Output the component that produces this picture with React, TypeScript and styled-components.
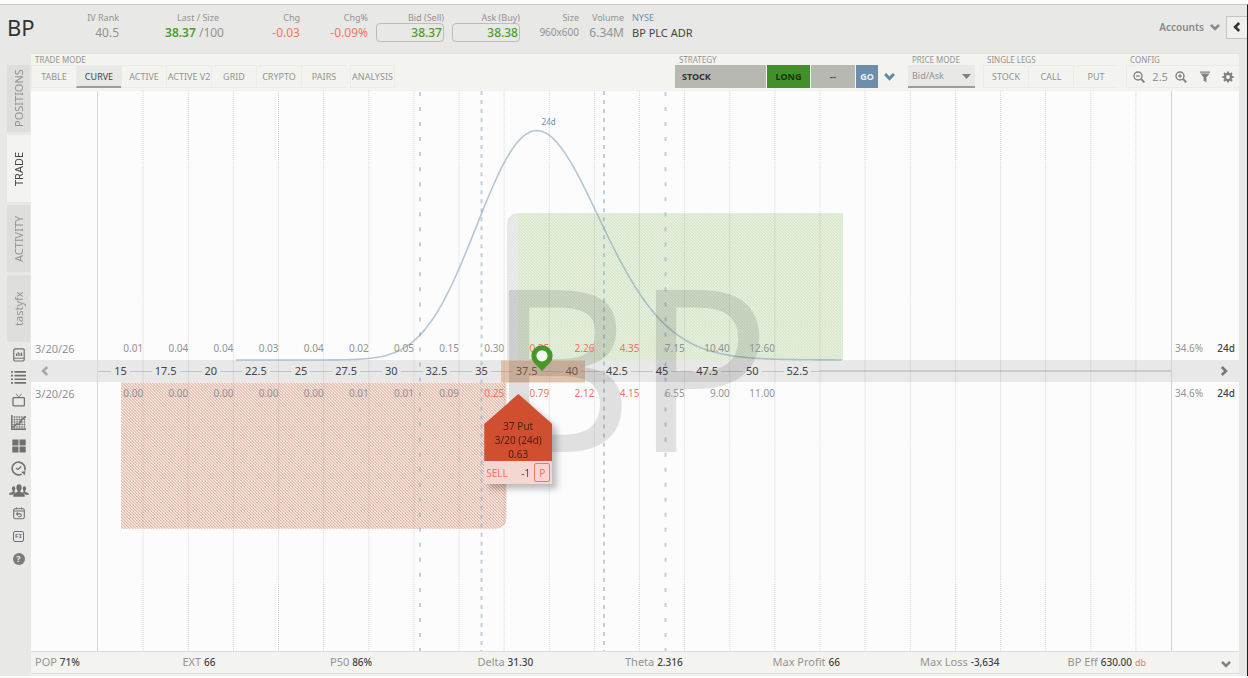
import React from 'react';
import styled, { createGlobalStyle, css } from 'styled-components';

const GlobalStyle = createGlobalStyle`
  *, *::before, *::after { box-sizing: border-box; }
  html, body { margin: 0; background: #fff; }
  body, button, select { font-family: 'Noto Sans', 'Open Sans', sans-serif; }
  button { border: 0; padding: 0; background: none; cursor: pointer; }
`;

const c = {
  chrome: '#e8e8e6',
  panel: '#f3f3ef',
  line: '#e3e3df',
  chart: '#fcfcfc',
  muted: '#939393',
  dark: '#444444',
  red: '#f17564',
  green: '#4d9c2d',
  blue: '#6d90ae',
};

/* ---------- shell ---------- */

const Page = styled.div`
  display: flex;
  flex-direction: column;
  height: 100vh;
  min-height: 620px;
  min-width: 1200px;
  padding: 4px 0 2px;
`;

const Frame = styled.div`
  flex: 1;
  display: flex;
  flex-direction: column;
  background: ${c.chrome};
  border-top: 1px solid #c9c9c5;
  border-right: 1px solid #1c1f22;
  min-height: 0;
`;

const Body = styled.div`
  flex: 1;
  display: flex;
  min-height: 0;
  padding-right: 8px;
`;

/* ---------- quote header ---------- */

const Header = styled.header`
  display: flex;
  height: 48px;
  flex-shrink: 0;
  padding-top: 7px;
`;

const Ticker = styled.h1`
  margin: 0;
  width: 64px;
  padding-left: 7px;
  font-size: 22px;
  line-height: 30px;
  font-weight: 400;
  color: #333;
`;

const Quote = styled.div<{ $w: number; $left?: boolean }>`
  width: ${(p) => p.$w}px;
  margin-right: 8px;
  display: flex;
  flex-direction: column;
  align-items: ${(p) => (p.$left ? 'flex-start' : 'flex-end')};
  white-space: nowrap;
`;

const QuoteLabel = styled.span<{ $tone?: string; $inset?: boolean }>`
  font-size: 9px;
  line-height: 12px;
  height: 11px;
  padding-right: ${(p) => (p.$inset ? 5 : 0)}px;
  color: ${(p) => p.$tone ?? c.muted};
`;

const QuoteValue = styled.span<{ $tone?: string; $size?: number; $strong?: boolean }>`
  font-size: ${(p) => p.$size ?? 12}px;
  line-height: 19px;
  font-weight: ${(p) => (p.$strong ? 600 : 400)};
  color: ${(p) => p.$tone ?? c.muted};
`;

const PriceButton = styled.button`
  width: 68px;
  height: 19px;
  border: 1px solid #bcbcba;
  border-radius: 4px;
  padding-right: 1px;
  text-align: right;
  font-size: 12px;
  line-height: 16px;
  font-weight: 500;
  color: ${c.green};
`;

const HeaderEnd = styled.div`
  margin-left: auto;
  display: flex;
  align-items: center;
  height: 30px;
  gap: 6px;
`;

const Accounts = styled.button`
  display: flex;
  align-items: center;
  gap: 6px;
  font-size: 10px;
  font-weight: 600;
  color: #888;
`;

const Collapse = styled.button`
  display: flex;
  align-items: center;
  justify-content: center;
  width: 21px;
  height: 23px;
  background: #f0f0ee;
  border: 1px solid #c4c4c2;
  border-right: 0;
`;

/* ---------- sidebar ---------- */

const Sidebar = styled.nav`
  width: 31px;
  flex-shrink: 0;
  padding: 12px 0 0 7px;
`;

const SideTabs = styled.div`
  display: flex;
  flex-direction: column;
  gap: 3px;
`;

const SideTab = styled.button<{ $active?: boolean }>`
  height: 67px;
  width: ${(p) => (p.$active ? 24 : 23)}px;
  display: flex;
  align-items: center;
  justify-content: center;
  writing-mode: vertical-rl;
  transform: rotate(180deg);
  font-size: 11px;
  line-height: 22px;
  color: ${(p) => (p.$active ? c.dark : c.muted)};
  background: ${(p) => (p.$active ? c.panel : '#dededc')};
`;

const SideIcons = styled.div`
  display: flex;
  flex-direction: column;
  justify-content: space-between;
  height: 226px;
  margin-top: 2px;
`;

const SideIcon = styled.button`
  display: flex;
  align-items: center;
  justify-content: center;
  width: 23px;
  height: 22px;
  color: #707070;
`;

/* ---------- toolbar ---------- */

const Main = styled.main`
  flex: 1;
  min-width: 0;
  display: flex;
  flex-direction: column;
  background: ${c.panel};
`;

const Toolbar = styled.div`
  display: flex;
  height: 38px;
  flex-shrink: 0;
  border-top: 1px solid ${c.line};
  gap: 8px;
`;

const Group = styled.section<{ $grow?: boolean }>`
  display: flex;
  flex-direction: column;
  ${(p) => p.$grow && css`flex: 1;`}
`;

const GroupLabel = styled.span`
  height: 11px;
  padding-left: 4px;
  font-size: 8px;
  line-height: 12px;
  color: ${c.muted};
  white-space: nowrap;
`;

const Strip = styled.div<{ $gap?: number }>`
  display: flex;
  height: 23px;
  gap: ${(p) => p.$gap ?? 0}px;
`;

const ModeButton = styled.button<{ $active?: boolean; $apart?: boolean }>`
  width: 45px;
  height: 23px;
  margin-left: ${(p) => (p.$apart ? 4 : 0)}px;
  font-size: 9px;
  line-height: 21px;
  white-space: nowrap;
  color: ${(p) => (p.$active ? c.dark : c.muted)};
  background: ${(p) => (p.$active ? '#e8e8e6' : 'transparent')};
  border: 1px solid #ebebe7;
  border-right-width: ${(p) => (p.$apart ? 1 : 0)}px;
  ${(p) => p.$active && css`border-bottom: 2px solid #9c9c9a;`}
`;

const StrategyButton = styled.button<{ $w: number; $bg: string; $fg: string; $start?: boolean }>`
  width: ${(p) => p.$w}px;
  height: 23px;
  padding: 0 7px;
  text-align: ${(p) => (p.$start ? 'left' : 'center')};
  background: ${(p) => p.$bg};
  color: ${(p) => p.$fg};
  font-size: 9px;
  font-weight: 700;
`;

const IconButton = styled.button<{ $w?: number }>`
  width: ${(p) => p.$w ?? 22}px;
  height: 23px;
  display: flex;
  align-items: center;
  justify-content: center;
  color: #808080;
`;

const GoButton = styled(StrategyButton)`
  padding: 0;
`;

const SelectWrap = styled.label`
  position: relative;
  display: block;
  height: 23px;
  svg { position: absolute; right: 4px; top: 9px; pointer-events: none; }
`;

const Select = styled.select`
  display: block;
  appearance: none;
  width: 67px;
  height: 23px;
  padding: 0 4px;
  border: 0;
  border-bottom: 2px solid #9c9c9a;
  border-radius: 0;
  background: #e8e8e6;
  font-size: 9px;
  color: ${c.muted};
`;

const ConfigStrip = styled(Strip)`
  width: 113px;
  border: 1px solid #ebebe7;
  border-right: 0;
  align-items: center;
  justify-content: space-between;
  padding: 0 0 0 1px;
`;

const ZoomValue = styled.span`
  font-size: 11px;
  color: ${c.muted};
`;

/* ---------- chart ---------- */

const Chart = styled.div`
  position: relative;
  flex: 1;
  min-height: 0;
  display: grid;
  grid-template-columns: 67px minmax(0, 1fr) 68px;
  grid-template-rows: minmax(0, 1fr) 22px minmax(0, 1fr);
  background: ${c.chart};
  border-bottom: 1px solid #dededa;
`;

const Plot = styled.div`
  grid-column: 2;
  grid-row: 1 / 4;
  position: relative;
  box-shadow: -1px 0 #d8d8d8, 1px 0 #d0d0d0;
`;

const Drawing = styled.svg`
  position: absolute;
  inset: 0;
  width: 100%;
  height: 100%;
`;

const Watermark = styled.span`
  position: absolute;
  left: 50%;
  top: 50%;
  transform: translate(-52%, -53%);
  font-size: 226px;
  line-height: 226px;
  color: rgba(0, 0, 0, 0.11);
`;

const Band = styled.div<{ $col: number }>`
  grid-column: ${(p) => p.$col};
  grid-row: 2;
  background: rgba(0, 0, 0, 0.08);
  display: flex;
  align-items: center;
`;

const Pager = styled.button<{ $tone: string; $end?: boolean }>`
  display: flex;
  margin-left: ${(p) => (p.$end ? 48 : 9)}px;
  color: ${(p) => p.$tone};
`;

const StrikeColumns = styled.div`
  display: grid;
  width: 100%;
  grid-template-columns: repeat(23, minmax(0, 9fr)) minmax(0, 7fr);
`;

const Strike = styled.span`
  display: flex;
  align-items: center;
  justify-content: center;
  gap: 3px;
  font-size: 11px;
  line-height: 22px;
  color: ${c.dark};
  &::before, &::after { content: ''; flex: 1; height: 1px; background: #c4c4c4; }
`;

const StrikeTail = styled.span`
  grid-column: 17 / 25;
  align-self: center;
  height: 2px;
  background: #cbcbcb;
`;

const PriceRow = styled.div<{ $row: number }>`
  grid-column: 1 / 4;
  grid-row: ${(p) => p.$row};
  align-self: ${(p) => (p.$row === 1 ? 'end' : 'start')};
  position: relative;
  display: grid;
  grid-template-columns: 67px minmax(0, 1fr) 68px;
  font-size: 11px;
  line-height: 23px;
  height: 23px;
  color: ${c.muted};
`;

const Expiry = styled.span`
  padding-left: 4px;
`;

const Price = styled.span<{ $hot?: boolean }>`
  text-align: right;
  font-size: 10px;
  color: ${(p) => (p.$hot ? c.red : c.muted)};
`;

const Vol = styled.span`
  display: flex;
  justify-content: space-between;
  padding: 0 4px;
  font-size: 10px;
  b { font-weight: 500; color: ${c.dark}; }
`;

const DayTag = styled.span`
  position: absolute;
  left: 42%;
  top: 24px;
  transform: translateX(-50%);
  font-size: 8px;
  line-height: 14px;
  color: ${c.blue};
`;

const Overlay = styled.div`
  grid-column: 2;
  grid-row: 1 / 4;
  position: relative;
`;

const SpotPin = styled.svg`
  position: absolute;
  left: 41%;
  bottom: 50%;
  transform: translateX(-7px);
`;

const LegCard = styled.div`
  position: absolute;
  left: 36%;
  top: calc(50% + 23px);
  width: 68px;
  filter: drop-shadow(5px 5px 3px rgba(0, 0, 0, 0.25));
`;

const LegBody = styled.div`
  height: 67px;
  padding-top: 25px;
  text-align: center;
  font-size: 10px;
  line-height: 14px;
  color: #4a1d12;
  background: #cf4f30;
  clip-path: polygon(50% 0, 100% 30px, 100% 100%, 0 100%, 0 30px);
`;

const LegFooter = styled.div`
  display: flex;
  align-items: center;
  height: 23px;
  padding: 0 2px 0 2px;
  background: #f5d6d1;
  font-size: 10px;
  color: ${c.dark};
`;

const SellButton = styled.button`
  font-size: 10px;
  color: ${c.red};
  margin-right: auto;
`;

const PutButton = styled.button`
  width: 16px;
  height: 19px;
  margin-left: 4px;
  border: 1px solid ${c.red};
  border-radius: 2px;
  font-size: 10px;
  line-height: 16px;
  color: ${c.red};
`;

/* ---------- footer ---------- */

const Stats = styled.footer`
  display: grid;
  grid-template-columns: repeat(8, minmax(0, 1fr)) 24px;
  height: 22px;
  flex-shrink: 0;
  padding-left: 4px;
  border-bottom: 1px solid #dededa;
  margin-bottom: 2px;
`;

const Stat = styled.span`
  font-size: 11px;
  line-height: 20px;
  color: ${c.muted};
  white-space: nowrap;
  b { font-size: 10px; font-weight: 500; color: ${c.dark}; }
  i { font-size: 9px; font-style: normal; color: ${c.red}; }
`;

/* ---------- icons ---------- */

const Chevron = ({ dir, color, size = 10 }: { dir: 'down' | 'left' | 'right'; color: string; size?: number }) => {
  const turn = { down: 0, left: 90, right: -90 }[dir];
  return (
    <svg width={size} height={size} viewBox="0 0 10 10" aria-hidden="true">
      <path d="M1 2.8l4 4.1L9 2.8" fill="none" stroke={color} strokeWidth="2.6" transform={`rotate(${turn} 5 5)`} />
    </svg>
  );
};

const Magnifier = ({ plus }: { plus?: boolean }) => (
  <svg width="12" height="12" viewBox="0 0 12 12" fill="none" stroke="currentColor" strokeWidth="1.4" aria-hidden="true">
    <circle cx="5" cy="5" r="4" />
    <path d="M8 8l3.4 3.4" strokeWidth="1.9" />
    <path d="M3 5h4" strokeWidth="1.2" />
    {plus && <path d="M5 3v4" strokeWidth="1.2" />}
  </svg>
);

const Funnel = () => (
  <svg width="10" height="12" viewBox="0 0 10 12" fill="currentColor" aria-hidden="true">
    <path d="M0 .5h10v1.3H0zM.4 2.4h9.2L6.4 6.2V11.5L3.6 9.6V6.2z" />
  </svg>
);

const Gear = () => (
  <svg width="12" height="12" viewBox="0 0 12 12" fill="none" stroke="currentColor" aria-hidden="true">
    <circle cx="6" cy="6" r="3.1" strokeWidth="2.2" />
    <path d="M6 .4v2M6 9.6v2M.4 6h2M9.6 6h2M2 2l1.5 1.5M8.5 8.5L10 10M2 10l1.5-1.5M8.5 3.5L10 2" strokeWidth="2" />
  </svg>
);

const sideIcons: { name: string; w: number; h: number; art: React.ReactNode }[] = [
  {
    name: 'News', w: 12, h: 14,
    art: (
      <g fill="none" stroke="currentColor">
        <rect x=".8" y=".8" width="10.4" height="12.2" rx="1.2" strokeWidth="1.2" />
        <path d="M1 10.2h10" />
        <path d="M3.5 8V5.5M5.2 8V4M6.9 8V5M8.6 8V4.6" strokeWidth="1.1" />
      </g>
    ),
  },
  {
    name: 'Watchlist', w: 15, h: 13,
    art: <path fill="currentColor" d="M0 0h2v1.7H0zM3.5 0H15v1.7H3.5zM0 3.7h2v1.7H0zM3.5 3.7H15v1.7H3.5zM0 7.4h2v1.7H0zM3.5 7.4H15v1.7H3.5zM0 11.1h2v1.7H0zM3.5 11.1H15v1.7H3.5z" />,
  },
  {
    name: 'TV', w: 13, h: 14,
    art: (
      <g fill="none" stroke="currentColor">
        <rect x="1" y="4.6" width="11.4" height="8.2" rx=".8" strokeWidth="1.3" />
        <path d="M6.7 4.4L4 .6M6.7 4.4L9.6.6" strokeWidth=".8" />
      </g>
    ),
  },
  {
    name: 'Chart', w: 16, h: 15,
    art: (
      <g fill="none" stroke="currentColor">
        <path d="M.8 0v14.3H15" strokeWidth="1.4" />
        <path d="M3.5 1v13M6 1v13M8.5 1v13M11 1v13M13.5 1v13M1 2h13.5M1 4.5h13.5M1 7h13.5M1 9.5h13.5M1 12h13.5" strokeWidth=".6" />
        <path d="M1.5 12.5l3.8-3.4 3 .2 2.4-4.8L15 1.5" strokeWidth="1.5" />
      </g>
    ),
  },
  {
    name: 'Layout', w: 14, h: 14,
    art: <path fill="currentColor" d="M.3.5h6.2v6H.3zM7.5.5h6.2v6H7.5zM.3 7.5h6.2v6H.3zM7.5 7.5h6.2v6H7.5z" />,
  },
  {
    name: 'History', w: 15, h: 15,
    art: (
      <g fill="none" stroke="currentColor">
        <path d="M13.6 9.6A6.4 6.4 0 1 0 10.6 13.1" strokeWidth="1.6" />
        <path d="M4.8 7l2.200 1.500 3.200-3" strokeWidth="1.3" />
        <path d="M10.200 10.700L14.600 10.200 13.600 14.300z" fill="currentColor" stroke="none" />
      </g>
    ),
  },
  {
    name: 'Community', w: 20, h: 14,
    art: (
      <g fill="currentColor">
        <ellipse cx="10" cy="3.4" rx="2.6" ry="3.2" />
        <path d="M8.6 5.5h2.8v2.2l3.6 1.9c.6.4.8 1.1.8 3.2H4.2c0-2.1.2-2.8.8-3.2l3.6-1.9z" />
        <ellipse cx="4.6" cy="4.6" rx="1.7" ry="2.3" />
        <path d="M3.8 6h1.7v1.8l1.2.7-2 .9c-.5.3-.8.8-.9 1.4H.1c0-1.2.2-1.5.7-1.7l3-1.3z" />
        <ellipse cx="15.4" cy="4.6" rx="1.7" ry="2.3" />
        <path d="M16.2 6h-1.7v1.8l-1.2.7 2 .9c.5.3.8.8.9 1.4h3.7c0-1.2-.2-1.5-.7-1.7l-3-1.3z" />
      </g>
    ),
  },
  {
    name: 'Calendar', w: 12, h: 13,
    art: (
      <g fill="none" stroke="currentColor">
        <rect x=".7" y="1.7" width="10.6" height="10" rx="1.6" strokeWidth="1.1" />
        <path d="M1 4h10M3.4.3v2M8.6.3v2" />
        <path d="M5 5.4L3.5 6.9 5 8.3M3.7 6.9h3.2a1.4 1.4 0 0 1 0 2.8H5" strokeWidth="1.1" />
      </g>
    ),
  },
];

const FiMark = styled.span`
  width: 11px;
  height: 11px;
  border: 1px solid currentColor;
  border-radius: 2px;
  font: 700 6px/9px 'Liberation Mono', monospace;
  text-align: center;
`;

const HelpMark = styled.span`
  width: 12px;
  height: 12px;
  border-radius: 50%;
  background: #7c7c7c;
  color: ${c.chrome};
  font-size: 9px;
  line-height: 12px;
  font-weight: 700;
  text-align: center;
`;

/* ---------- data ---------- */

const modes = ['TABLE', 'CURVE', 'ACTIVE', 'ACTIVE V2', 'GRID', 'CRYPTO', 'PAIRS', 'ANALYSIS'];
const strikes = ['15', '17.5', '20', '22.5', '25', '27.5', '30', '32.5', '35', '37.5', '40', '42.5', '45', '47.5', '50', '52.5'];
const asks = ['0.01', '0.04', '0.04', '0.03', '0.04', '0.02', '0.05', '0.15', '0.30', '0.95', '2.26', '4.35', '7.15', '10.40', '12.60'];
const bids = ['0.00', '0.00', '0.00', '0.00', '0.00', '0.01', '0.01', '0.09', '0.25', '0.79', '2.12', '4.15', '6.55', '9.00', '11.00'];
const stats: [string, string, string?][] = [
  ['POP', '71%'],
  ['EXT', '66'],
  ['P50', '86%'],
  ['Delta', '31.30'],
  ['Theta', '2.316'],
  ['Max Profit', '66'],
  ['Max Loss', '-3,634'],
  ['BP Eff', '630.00', 'db'],
];

/* Plot coordinates: 1073 x 559 units, price axis across the middle. */
const W = 1073;
const H = 559;
const MID = 280;
const STEP = (W * 9) / 214;
const xToPrice = (x: number) => 15 + ((x - STEP / 2) / STEP) * 2.5;

/* Log-normal price distribution at expiry. */
const curvePath = (() => {
  const mode = 38.06;
  const sigma = 0.0885;
  const points: string[] = [];
  for (let x = 138; x <= 745; x += 3) {
    const z = Math.log(xToPrice(x) / mode) / sigma;
    points.push(`${x} ${(MID - 11.5 - 229 * Math.exp((-z * z) / 2)).toFixed(2)}`);
  }
  return `M${points.join('L')}`;
})();

const PlotDrawing = () => (
  <Drawing viewBox={`0 0 ${W} ${H}`} preserveAspectRatio="none" aria-hidden="true">
    <defs>
      <pattern id="gain" width="3" height="3" patternUnits="userSpaceOnUse">
        <rect width="3" height="3" fill="#ebf3e5" />
        <path d="M-1 -1L4 4M-1 2L1 4M2 -1L4 1" stroke="#cde1be" strokeWidth="0.9" />
      </pattern>
      <pattern id="loss" width="3" height="3" patternUnits="userSpaceOnUse">
        <rect width="3" height="3" fill="#fbf0ec" />
        <path d="M-1 -1L4 4M-1 2L1 4M2 -1L4 1" stroke="#dba291" strokeWidth="0.9" />
      </pattern>
      <pattern id="flat" width="3" height="3" patternUnits="userSpaceOnUse">
        <rect width="3" height="3" fill="#efefef" />
        <path d="M-1 -1L4 4M-1 2L1 4M2 -1L4 1" stroke="#dedede" strokeWidth="0.9" />
      </pattern>
    </defs>
    <path d={`M420 ${MID - 11}H409V${MID - 148}a10 10 0 0 1 10 -10H420z`} fill="url(#flat)" />
    <rect x="420" y={MID - 158} width="325" height="147" fill="url(#gain)" />
    <path d={`M23 ${MID + 11}H408.5V${MID + 147}a10 10 0 0 1 -10 10H23z`} fill="url(#loss)" />
    <path
      d={Array.from({ length: 23 }, (_, i) => `M${((i + 1) * STEP).toFixed(1)} 0V${H}`).join('')}
      stroke="#000"
      strokeOpacity="0.15"
      strokeDasharray="1 1"
    />
    <rect x="403" y={MID - 11} width="84" height="22" fill="#d08a50" fillOpacity="0.4" />
    <path d={curvePath} fill="none" stroke="#86a3bc" strokeOpacity="0.6" strokeWidth="1.6" />
    <g stroke="#86a3bc" strokeOpacity="0.5" strokeWidth="2">
      <path d={`M322 1V${H}M567.5 1V${H}`} strokeDasharray="4 11" />
      <path d={`M383.5 0V${H}M506 0V${H}`} strokeDasharray="4 5" />
    </g>
  </Drawing>
);

const isHot = (i: number, from: number) => i >= from && i <= 11;

const Prices = ({ row, values, hotFrom }: { row: number; values: string[]; hotFrom: number }) => (
  <PriceRow $row={row}>
    <Expiry>3/20/26</Expiry>
    <StrikeColumns>
      {values.map((v, i) => (
        <Price key={i} $hot={isHot(i, hotFrom)}>{v}</Price>
      ))}
    </StrikeColumns>
    <Vol>
      34.6% <b>24d</b>
    </Vol>
  </PriceRow>
);

export default function App() {
  return (
    <Page>
      <GlobalStyle />
      <Frame>
        <Header>
          <Ticker>BP</Ticker>
          <Quote $w={55}>
            <QuoteLabel>IV Rank</QuoteLabel>
            <QuoteValue>40.5</QuoteValue>
          </Quote>
          <Quote $w={97}>
            <QuoteLabel $inset>Last / Size</QuoteLabel>
            <QuoteValue>
              <QuoteValue $tone={c.green} $strong>38.37</QuoteValue> /100
            </QuoteValue>
          </Quote>
          <Quote $w={68}>
            <QuoteLabel>Chg</QuoteLabel>
            <QuoteValue $tone={c.red}>-0.03</QuoteValue>
          </Quote>
          <Quote $w={60}>
            <QuoteLabel>Chg%</QuoteLabel>
            <QuoteValue $tone={c.red}>-0.09%</QuoteValue>
          </Quote>
          <Quote $w={68}>
            <QuoteLabel>Bid (Sell)</QuoteLabel>
            <PriceButton>38.37</PriceButton>
          </Quote>
          <Quote $w={68}>
            <QuoteLabel>Ask (Buy)</QuoteLabel>
            <PriceButton>38.38</PriceButton>
          </Quote>
          <Quote $w={51}>
            <QuoteLabel>Size</QuoteLabel>
            <QuoteValue $size={10}>960x600</QuoteValue>
          </Quote>
          <Quote $w={37}>
            <QuoteLabel>Volume</QuoteLabel>
            <QuoteValue>6.34M</QuoteValue>
          </Quote>
          <Quote $w={100} $left>
            <QuoteLabel $tone={c.blue}>NYSE</QuoteLabel>
            <QuoteValue $size={11} $tone={c.dark}>BP PLC ADR</QuoteValue>
          </Quote>
          <HeaderEnd>
            <Accounts>
              Accounts <Chevron dir="down" color="#888" />
            </Accounts>
            <Collapse aria-label="Collapse panel">
              <Chevron dir="left" color="#333" />
            </Collapse>
          </HeaderEnd>
        </Header>

        <Body>
          <Sidebar>
            <SideTabs>
              <SideTab>POSITIONS</SideTab>
              <SideTab $active>TRADE</SideTab>
              <SideTab>ACTIVITY</SideTab>
              <SideTab>tastyfx</SideTab>
            </SideTabs>
            <SideIcons>
              {sideIcons.map((s) => (
                <SideIcon key={s.name} aria-label={s.name}>
                  <svg width={s.w} height={s.h} viewBox={`0 0 ${s.w} ${s.h}`}>{s.art}</svg>
                </SideIcon>
              ))}
              <SideIcon><FiMark>FI</FiMark></SideIcon>
              <SideIcon><HelpMark>?</HelpMark></SideIcon>
            </SideIcons>
          </Sidebar>

          <Main>
            <Toolbar>
              <Group $grow>
                <GroupLabel>TRADE MODE</GroupLabel>
                <Strip>
                  {modes.map((m) => (
                    <ModeButton key={m} $active={m === 'CURVE'} $apart={m === 'ANALYSIS'}>{m}</ModeButton>
                  ))}
                </Strip>
              </Group>
              <Group>
                <GroupLabel>STRATEGY</GroupLabel>
                <Strip $gap={1}>
                  <StrategyButton $w={91} $bg="#b8b8b3" $fg="#333" $start>STOCK</StrategyButton>
                  <StrategyButton $w={43} $bg="#42902a" $fg="#16330d">LONG</StrategyButton>
                  <StrategyButton $w={44} $bg="#b8b8b3" $fg="#444">--</StrategyButton>
                  <GoButton $w={22} $bg="#6c8eaa" $fg="#e9eff4">GO</GoButton>
                  <IconButton $w={21} aria-label="More strategies">
                    <Chevron dir="down" color="#5f87a8" size={11} />
                  </IconButton>
                </Strip>
              </Group>
              <Group>
                <GroupLabel>PRICE MODE</GroupLabel>
                <SelectWrap>
                  <Select aria-label="Price mode" defaultValue="Bid/Ask">
                    <option>Bid/Ask</option>
                    <option>Mid</option>
                  </Select>
                  <svg width="9" height="5" viewBox="0 0 9 5"><path d="M0 0h9L4.5 5z" fill="#808080" /></svg>
                </SelectWrap>
              </Group>
              <Group>
                <GroupLabel>SINGLE LEGS</GroupLabel>
                <Strip>
                  <ModeButton>STOCK</ModeButton>
                  <ModeButton>CALL</ModeButton>
                  <ModeButton>PUT</ModeButton>
                </Strip>
              </Group>
              <Group>
                <GroupLabel>CONFIG</GroupLabel>
                <ConfigStrip>
                  <IconButton aria-label="Zoom out"><Magnifier /></IconButton>
                  <ZoomValue>2.5</ZoomValue>
                  <IconButton aria-label="Zoom in"><Magnifier plus /></IconButton>
                  <IconButton $w={20} aria-label="Filter"><Funnel /></IconButton>
                  <IconButton aria-label="Settings"><Gear /></IconButton>
                </ConfigStrip>
              </Group>
            </Toolbar>

            <Chart>
              <Plot>
                <PlotDrawing />
                <Watermark>BP</Watermark>
                <DayTag>24d</DayTag>
              </Plot>
              <Band $col={1}>
                <Pager $tone="#a8a8a8" aria-label="Lower strikes"><Chevron dir="left" color="currentColor" /></Pager>
              </Band>
              <Band $col={2}>
                <StrikeColumns>
                  {strikes.map((s) => <Strike key={s}>{s}</Strike>)}
                  <StrikeTail />
                </StrikeColumns>
              </Band>
              <Band $col={3}>
                <Pager $tone="#777" $end aria-label="Higher strikes"><Chevron dir="right" color="currentColor" /></Pager>
              </Band>
              <Prices row={1} values={asks} hotFrom={9} />
              <Prices row={3} values={bids} hotFrom={8} />
              <Overlay>
                <SpotPin width="22" height="26" viewBox="0 0 22 26" aria-hidden="true">
                  <path d="M11 26L3 17.8A10.6 10.6 0 1 1 19 17.8z" fill="#47962a" />
                  <circle cx="11" cy="10.8" r="5.6" fill="#f4f8f0" />
                </SpotPin>
                <LegCard>
                  <LegBody>
                    37 Put<br />3/20 (24d)<br />0.63
                  </LegBody>
                  <LegFooter>
                    <SellButton>SELL</SellButton>
                    -1
                    <PutButton>P</PutButton>
                  </LegFooter>
                </LegCard>
              </Overlay>
            </Chart>

            <Stats>
              {stats.map(([label, value, unit]) => (
                <Stat key={label}>
                  {label} <b>{value}</b> {unit && <i>{unit}</i>}
                </Stat>
              ))}
              <IconButton aria-label="More stats"><Chevron dir="down" color="#808080" /></IconButton>
            </Stats>
          </Main>
        </Body>
      </Frame>
    </Page>
  );
}
